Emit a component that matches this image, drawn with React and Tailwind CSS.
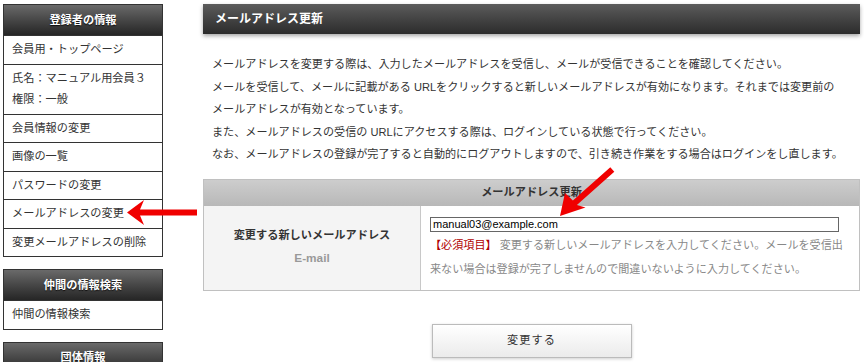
import React from 'react';

const jp = { fontFamily: '"Liberation Sans", "Noto Sans CJK JP", sans-serif' };

const SideHeader = ({ children }) => (
  <div className="h-[30px] flex items-center justify-center bg-gradient-to-b from-[#6a6a6a] to-[#262626] text-white font-bold text-[11.2px] [text-shadow:0_1px_1px_rgba(0,0,0,0.8)]">
    {children}
  </div>
);

const SideItem = ({ children }) => (
  <div className="border-t border-[#333] px-[8px] py-[3px] leading-[21.5px] text-[11.2px] text-[#333]">
    {children}
  </div>
);

const Sidebar = () => (
  <div className="w-[160px] flex flex-col gap-[12px] shrink-0">
    <div className="border border-[#333]">
      <SideHeader>登録者の情報</SideHeader>
      <SideItem>会員用・トップページ</SideItem>
      <SideItem>
        <div>氏名：マニュアル用会員３</div>
        <div>権限：一般</div>
      </SideItem>
      <SideItem>会員情報の変更</SideItem>
      <SideItem>画像の一覧</SideItem>
      <SideItem>パスワードの変更</SideItem>
      <SideItem>メールアドレスの変更</SideItem>
      <SideItem>変更メールアドレスの削除</SideItem>
    </div>
    <div className="border border-[#333]">
      <SideHeader>仲間の情報検索</SideHeader>
      <SideItem>仲間の情報検索</SideItem>
    </div>
    <div className="border border-[#333]">
      <SideHeader>団体情報</SideHeader>
    </div>
  </div>
);

const Arrows = () => (
  <svg className="absolute inset-0 pointer-events-none" width="864" height="362" viewBox="0 0 864 362">
    <polygon
      fill="#f00000"
      points="127,212.5 144,200 140,209.5 197,209.5 197,215.5 140,215.5 144,225"
    />
    <polygon
      fill="#f00000"
      points="560,216 585.5,207.5 576.9,204.9 614.3,171.7 610.3,167.3 572.9,200.5 565,193"
    />
  </svg>
);

export default function App() {
  return (
    <div className="relative w-[864px] h-[362px] overflow-hidden bg-white" style={jp}>
      <div className="flex pt-[4px] pl-[3px] gap-[40px]">
        <Sidebar />
        <div className="w-[657px] flex flex-col">
          <div className="h-[30px] flex items-center pl-[12px] bg-gradient-to-b from-[#5c5c5c] to-[#2c2c2c] text-white font-bold text-[12px] shadow-[0_2px_4px_rgba(0,0,0,0.35)]">
            メールアドレス更新
          </div>
          <div className="mt-[19px] pl-[9px] text-[11.1px] leading-[22.5px] text-[#333]">
            <p>メールアドレスを変更する際は、入力したメールアドレスを受信し、メールが受信できることを確認してください。</p>
            <p>メールを受信して、メールに記載がある URLをクリックすると新しいメールアドレスが有効になります。それまでは変更前の</p>
            <p>メールアドレスが有効となっています。</p>
            <p>また、メールアドレスの受信の URLにアクセスする際は、ログインしている状態で行ってください。</p>
            <p>なお、メールアドレスの登録が完了すると自動的にログアウトしますので、引き続き作業をする場合はログインをし直します。</p>
          </div>
          <div className="mt-[13px] border border-[#c0c0c0]">
            <div className="h-[26px] flex items-center justify-center bg-gradient-to-b from-[#cdcdcd] to-[#b8b8b8] font-bold text-[11.2px] text-[#333]">
              メールアドレス更新
            </div>
            <div className="flex h-[84px]">
              <div className="w-[217px] shrink-0 bg-[#f4f4f4] border-r border-[#c8c8c8] flex flex-col items-center justify-center gap-[5px] pb-[2px]">
                <div className="font-bold text-[11.2px] text-[#333] leading-[18px]">変更する新しいメールアドレス</div>
                <div className="font-bold text-[11.8px] text-[#999] leading-[18px]">E-mail</div>
              </div>
              <div className="flex-1 pt-[11px] pl-[9px] pr-[16px]">
                <div className="w-[409px] h-[15px] border border-[#666] flex items-center px-[2px] text-[11px] text-black leading-none">
                  manual03@example.com
                </div>
                <div className="text-[11.1px] leading-[24px] text-[#888] mt-[1px]">
                  <span className="text-[#b00000]">【必須項目】</span> 変更する新しいメールアドレスを入力してください。メールを受信出来ない場合は登録が完了しませんので間違いないように入力してください。
                </div>
              </div>
            </div>
          </div>
          <div className="mt-[33px] flex justify-center">
            <div className="w-[200px] h-[34px] border border-[#bbb] bg-gradient-to-b from-white to-[#ebebeb] shadow-[0_1px_3px_rgba(0,0,0,0.2)] flex items-center justify-center text-[11.2px] text-[#333] tracking-[1px]">
              変更する
            </div>
          </div>
        </div>
      </div>
      <Arrows />
    </div>
  );
}
